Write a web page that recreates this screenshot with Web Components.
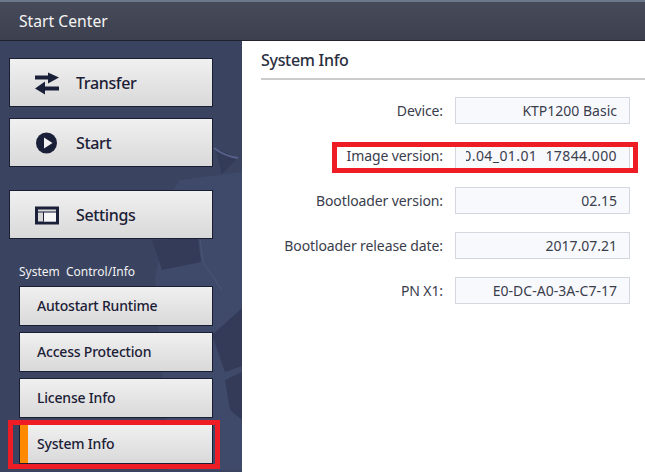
<!DOCTYPE html>
<html><head><meta charset="utf-8">
<style>
html,body{margin:0;height:100%;overflow:hidden}
body{font-family:"Noto Sans","Open Sans",sans-serif;background:#fff}
</style></head><body>
<start-center>
  <side-panel slot="side">
    <big-btn label="Transfer" style="margin-bottom:11px"><svg viewBox="0 0 26 24" width="26" height="24"><path fill="#1b2039" d="M13 1.500L24 6.500 13 12.500V8.500H0V4.500h13zM10 10.500V15.500H24V19.500H10V23.500L0 17.500z"/></svg></big-btn>
    <big-btn label="Start" style="margin-bottom:23px"><svg viewBox="0 0 26 24" width="26" height="24"><circle cx="11.500" cy="12" r="10.500" fill="#1b2039"/><path d="M9 6.500l8.500 5.500-8.500 5.500z" fill="#f2f2f2"/></svg></big-btn>
    <big-btn label="Settings" style="margin-bottom:24px"><svg viewBox="0 0 26 24" width="26" height="24"><path fill="#1b2039" d="M0 3.500h24v18H0z"/><path fill="#d8d8d8" d="M3 6.500h18v12H3z"/><path fill="#f7f7f7" d="M9 9.500h12v9H9z"/><path fill="none" stroke="#1b2039" d="M3 9h18M8.500 9v9.500"/></svg></big-btn>
    <side-heading>System&nbsp; Control/Info</side-heading>
    <small-btn>Autostart Runtime</small-btn>
    <small-btn>Access Protection</small-btn>
    <small-btn>License Info</small-btn>
    <small-btn active>System Info</small-btn>
  </side-panel>
  <info-panel slot="main">
    <info-row label="Device:" value="KTP1200 Basic"></info-row>
    <info-row label="Image version:" value="0.04_01.01&nbsp; 17844.000" mark></info-row>
    <info-row label="Bootloader version:" value="02.15"></info-row>
    <info-row label="Bootloader release date:" value="2017.07.21"></info-row>
    <info-row label="PN X1:" value="E0-DC-A0-3A-C7-17"></info-row>
  </info-panel>
</start-center>
<script>
function def(name, css, html){
  customElements.define(name, class extends HTMLElement{
    connectedCallback(){
      if(this.shadowRoot) return;
      const r=this.attachShadow({mode:"open"});
      r.innerHTML='<style>'+css+'</style>'+(typeof html==="function"?html(this):html);
    }
  });
}
def("start-center",`
:host{display:flex;flex-direction:column;width:645px;height:472px;overflow:hidden}
.bar{flex:none;height:38px;border-top:2px solid #6a7889;border-bottom:1px solid #20232f;background:linear-gradient(#474a58,#3d404e);color:#f4f4f4;font-size:15.7px;line-height:38px;padding-left:19px}
.body{flex:1;display:flex;min-height:0}
`,`<div class="bar">Start Center</div><div class="body"><slot name="side"></slot><slot name="main"></slot></div>`);
def("side-panel",`
:host{display:block;position:relative;flex:none;width:242px;box-sizing:border-box;padding:17px 29px 0 9px;background:#3a4460;overflow:hidden}
svg{position:absolute;left:0;top:0;z-index:0}
.c{position:relative;z-index:1;display:flex;flex-direction:column}
`,`<svg width="242" height="431" viewBox="0 41 242 431"><path fill="#3f4a6a" d="M155 278L172 192 180 180 242 172V470H170z"/><g fill="#333b58"><path d="M215 148L238 158 222 174z"/><path d="M152 240L198 238 201 262 162 270z"/><path d="M212 335L242 308V366L225 372z"/><path d="M225 380L242 372V420L230 410z"/></g><path d="M214 148Q224 156 238 158" fill="none" stroke="#56618a" stroke-width="2"/><path d="M200 238L203 262 222 290" fill="none" stroke="#4a5578" stroke-width="1"/></svg><div class="c"><slot></slot></div>`);
const btnCss=`
:host{display:flex;align-items:center;box-sizing:border-box;border:1px solid #1a1e33;background:linear-gradient(#f0f0f0,#d9d9d9);color:#1c2036}
`;
def("big-btn",btnCss+`
:host{height:49px;width:204px}
.i{flex:none;width:26px;height:24px;margin-left:25px;display:flex}
.t{margin-left:15px;font-size:16px;font-weight:500;letter-spacing:-.35px}
`,h=>`<span class="i"><slot></slot></span><span class="t">${h.getAttribute("label")}</span>`);
def("side-heading",`
:host{display:block;font-size:12px;line-height:16px;color:#f2f2f2;padding:1px 0 0 10px;margin-bottom:6px}
`,`<slot></slot>`);
def("small-btn",btnCss+`
:host{position:relative;height:40px;width:194px;margin-left:10px;margin-bottom:6px;font-size:14px;font-weight:500;letter-spacing:-.2px;padding-left:17px;padding-bottom:2px}
:host([active]){padding-left:9px;}
.o{display:none}
:host([active]) .o{display:block;flex:none;width:8px;height:38px;background:#ff8a00;margin:0 9px -2px -9px}
:host([active])::after{content:"";position:absolute;left:-12px;right:-8px;top:-5px;bottom:-6px;border:5px solid #ee1c25}
`,`<span class="o"></span><slot></slot>`);
def("info-panel",`
:host{display:flex;flex-direction:column;flex:1;min-width:0;background:#fff;padding-left:19px}
.h{font-size:16px;font-weight:500;letter-spacing:-.3px;color:#2a2e3e;line-height:39px;height:37px;border-bottom:2px solid #ccc;margin-bottom:17px;}
.r{display:flex;flex-direction:column;gap:18px;padding-right:15px}
`,`<div class="h">System Info</div><div class="r"><slot></slot></div>`);
def("info-row",`
:host{position:relative;display:flex;align-items:center;justify-content:flex-end;height:27px;font-size:14px;color:#3a3d4c}
.l{margin-right:12px;white-space:nowrap;letter-spacing:-.1px}
.v{width:175px;height:27px;box-sizing:border-box;border:1px solid #d5d7e0;background:#f8f9fd;display:flex;justify-content:flex-end;align-items:center;padding-right:12px;white-space:nowrap}
.x{display:flex;justify-content:flex-end;overflow:hidden;flex:none;max-width:151px}
.x span{flex:none}
:host([mark]) .x span{letter-spacing:.42px}
:host([mark]) .v{border-width:0 1px 0 1px}
:host([mark])::after{content:"";position:absolute;left:71px;right:-8px;top:0;bottom:-4px;border:5px solid #ee1c25}
`,h=>`<span class="l">${h.getAttribute("label")}</span><span class="v"><span class="x"><span>${h.getAttribute("value")}</span></span></span>`);
</script>
</body></html>
